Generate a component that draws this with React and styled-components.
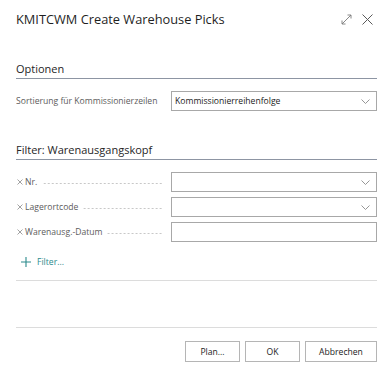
import styled, { createGlobalStyle } from "styled-components";

const Global = createGlobalStyle`
  html, body {
    margin: 0;
    padding: 0;
    background: #ffffff;
  }
  body {
    font-family: "Open Sans", "Noto Sans", Arial, sans-serif;
    color: #212121;
  }
`;

const filterFields = [
  { label: "Nr.", kind: "select" },
  { label: "Lagerortcode", kind: "select" },
  { label: "Warenausg.-Datum", kind: "text" },
];

const Chevron = () => (
  <svg width="9" height="5" viewBox="0 0 9 5" fill="none">
    <path d="M0.5 0.5L4.5 4.5L8.5 0.5" stroke="#8a8a8a" strokeWidth="0.9" />
  </svg>
);

const App = () => {
  return (
    <>
      <Global />
      <Dialog>
        <Header>
          <Title>KMITCWM Create Warehouse Picks</Title>
          <HeaderIcons>
            <svg width="11" height="11" viewBox="0 0 11 11" fill="none">
              <path d="M1 10L10 1M6.5 1H10V4.5M1 6.5V10H4.5" stroke="#7a7a7a" strokeWidth="0.9" />
            </svg>
            <svg width="11" height="11" viewBox="0 0 11 11" fill="none">
              <path d="M0.5 0.5L10.5 10.5M10.5 0.5L0.5 10.5" stroke="#5a5a5a" strokeWidth="1" />
            </svg>
          </HeaderIcons>
        </Header>

        <Section $top={33}>
          <SectionTitle>Optionen</SectionTitle>
          <Rows $top={12}>
            <Row>
              <Label>
                <span>Sortierung für Kommissionierzeilen</span>
                <Leader />
              </Label>
              <Field>
                <span>Kommissionierreihenfolge</span>
                <Chevron />
              </Field>
            </Row>
          </Rows>
        </Section>

        <Section $top={32}>
          <SectionTitle>Filter: Warenausgangskopf</SectionTitle>
          <Rows $top={12}>
            {filterFields.map((f) => (
              <Row key={f.label}>
                <Label>
                  <Remove width="6" height="6" viewBox="0 0 6 6" fill="none">
                    <path d="M0.5 0.5L5.5 5.5M5.5 0.5L0.5 5.5" stroke="#8a8a8a" strokeWidth="0.8" />
                  </Remove>
                  <span>{f.label}</span>
                  <Leader />
                </Label>
                <Field>
                  <span />
                  {f.kind === "select" && <Chevron />}
                </Field>
              </Row>
            ))}
          </Rows>
          <AddFilter>
            <svg width="10" height="10" viewBox="0 0 10 10" fill="none">
              <path d="M5 0V10M0 5H10" stroke="#2b8a8c" strokeWidth="1.1" />
            </svg>
            <span>Filter...</span>
          </AddFilter>
        </Section>

        <Divider $top={12} />
        <Divider $top={46} />

        <Footer>
          <Button>Plan...</Button>
          <Button $width={55}>OK</Button>
          <Button $width={72}>Abbrechen</Button>
        </Footer>
      </Dialog>
    </>
  );
};

const Dialog = styled.div`
  width: 392px;
  height: 374px;
  box-sizing: border-box;
  padding: 0 15px 0 16px;
  background: #ffffff;
  overflow: hidden;
`;

const Header = styled.div`
  display: flex;
  align-items: center;
  justify-content: space-between;
  padding-top: 9px;
  height: 20px;
`;

const Title = styled.div`
  font-size: 12.8px;
  font-weight: 400;
  color: #1f1f1f;
`;

const HeaderIcons = styled.div`
  display: flex;
  align-items: center;
  gap: 10px;
  padding-right: 4px;
`;

const Section = styled.div`
  margin-top: ${(p) => p.$top}px;
`;

const SectionTitle = styled.div`
  font-size: 11px;
  font-weight: 500;
  color: #262626;
  line-height: 14px;
  padding-bottom: 2px;
  border-bottom: 1px solid #8d95a3;
`;

const Rows = styled.div`
  display: flex;
  flex-direction: column;
  gap: 5px;
  margin-top: ${(p) => p.$top}px;
`;

const Row = styled.div`
  display: grid;
  grid-template-columns: 155px 1fr;
  align-items: center;
  height: 20px;
`;

const Label = styled.div`
  display: flex;
  align-items: center;
  font-size: 8.6px;
  color: #5c5c5c;
  padding-right: 8px;
  white-space: nowrap;
  overflow: hidden;
`;

const Remove = styled.svg`
  flex: none;
  margin: 0 2px 0 1px;
`;

const Leader = styled.span`
  flex: 1;
  margin-left: 5px;
  height: 1px;
  align-self: center;
  margin-top: 2px;
  background-image: radial-gradient(circle, #c8c8c8 0.6px, transparent 0.7px);
  background-size: 4px 1px;
  background-repeat: repeat-x;
  background-position: right center;
`;

const Field = styled.div`
  display: flex;
  align-items: center;
  justify-content: space-between;
  height: 20px;
  box-sizing: border-box;
  border: 1px solid #a8a8a8;
  padding: 0 6px 0 3px;
  font-size: 8.6px;
  color: #212121;
`;

const AddFilter = styled.div`
  display: flex;
  align-items: center;
  gap: 6px;
  margin-top: 14px;
  padding-left: 5px;
  font-size: 8.6px;
  color: #2b8a8c;
`;

const Divider = styled.div`
  margin-top: ${(p) => p.$top}px;
  height: 1px;
  background: #dcdcdc;
`;

const Footer = styled.div`
  display: flex;
  justify-content: flex-end;
  gap: 5px;
  margin-top: 13px;
`;

const Button = styled.button`
  width: ${(p) => p.$width || 55}px;
  height: 21px;
  box-sizing: border-box;
  border: 1px solid #b5b5b5;
  background: #ffffff;
  font-family: inherit;
  font-size: 8.6px;
  color: #212121;
  padding: 0;
  cursor: pointer;
`;

export default App;
